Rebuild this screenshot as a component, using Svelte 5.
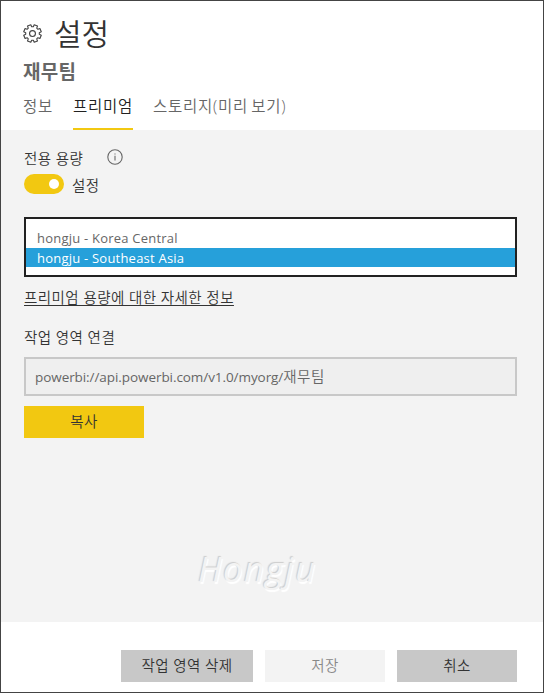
<script lang="ts">
	interface Tab {
		id: string;
		label: string;
	}

	const tabs: Tab[] = [
		{ id: 'about', label: '정보' },
		{ id: 'premium', label: '프리미엄' },
		{ id: 'storage', label: '스토리지(미리 보기)' }
	];

	const capacities = ['hongju - Korea Central', 'hongju - Southeast Asia'];
	const endpoint = 'powerbi://api.powerbi.com/v1.0/myorg/';
	const workspace = '재무팀';

	let activeTab = $state('premium');
	let dedicated = $state(true);
	let selected = $state(capacities[1]);

	// Outline of the eight-toothed gear in a 20x20 box, notches on the axes
	function gearPath(): string {
		const points: string[] = [];
		for (let i = 0; i < 8; i++) {
			const mid = ((i + 0.5) * Math.PI) / 4;
			for (const [offset, r] of [[-0.27, 7.2], [-0.2, 9.4], [0.2, 9.4], [0.27, 7.2]]) {
				const a = mid + offset;
				points.push(`${(10 + r * Math.cos(a)).toFixed(2)} ${(10 + r * Math.sin(a)).toFixed(2)}`);
			}
		}
		return `M${points.join('L')}Z`;
	}

	function copyConnection() {
		navigator.clipboard?.writeText(endpoint + workspace);
	}
</script>

<div class="panel">
	<header>
		<div class="title-row">
			<svg class="gear" viewBox="0 0 20 20" aria-hidden="true">
				<path d={gearPath()} />
				<circle cx="10" cy="10" r="3.1" />
			</svg>
			<h1>설정</h1>
		</div>
		<h2>{workspace}</h2>
		<nav role="tablist">
			{#each tabs as tab (tab.id)}
				<button
					class="tab"
					class:active={activeTab === tab.id}
					role="tab"
					type="button"
					aria-selected={activeTab === tab.id}
					onclick={() => (activeTab = tab.id)}
				>
					{tab.label}
				</button>
			{/each}
		</nav>
	</header>

	<main>
		<div class="label-row">
			<span class="label">전용 용량</span>
			<svg class="info" viewBox="0 0 16 16" aria-hidden="true">
				<circle cx="8" cy="8" r="7.2" />
				<path d="M8 6.7V11.6M8 4.4V5.6" />
			</svg>
		</div>
		<div class="toggle-row">
			<button
				class="toggle"
				class:on={dedicated}
				type="button"
				role="switch"
				aria-checked={dedicated}
				aria-label="전용 용량"
				onclick={() => (dedicated = !dedicated)}
			></button>
			<span>설정</span>
		</div>

		<div class="capacity-list" role="listbox">
			{#each capacities as capacity (capacity)}
				<button
					class="option"
					class:selected={selected === capacity}
					type="button"
					role="option"
					aria-selected={selected === capacity}
					onclick={() => (selected = capacity)}
				>
					{capacity}
				</button>
			{/each}
		</div>

		<a class="more" href="#premium">프리미엄 용량에 대한 자세한 정보</a>

		<span class="label connection-label">작업 영역 연결</span>
		<div class="connection">{endpoint}<span class="workspace">{workspace}</span></div>
		<button class="btn copy" type="button" onclick={copyConnection}>복사</button>

		<div class="watermark">Hongju</div>
	</main>

	<footer>
		<button class="btn delete" type="button">작업 영역 삭제</button>
		<button class="btn save" type="button" disabled>저장</button>
		<button class="btn cancel" type="button">취소</button>
	</footer>
</div>

<style>
	.panel {
		box-sizing: border-box;
		display: flex;
		flex-direction: column;
		width: 544px;
		height: 693px;
		border: 1px solid #444444;
		background: #ffffff;
		color: #333333;
		font-family: 'Open Sans', 'Noto Sans CJK KR', sans-serif;
		font-size: 14.5px;
		font-weight: 350;
		letter-spacing: 0.45px;
	}

	button {
		margin: 0;
		padding: 0;
		border: 0;
		background: none;
		color: inherit;
		font: inherit;
		letter-spacing: inherit;
		white-space: nowrap;
		cursor: pointer;
	}

	header {
		height: 129px;
		flex: none;
	}

	.title-row {
		display: flex;
		align-items: center;
		height: 38px;
		padding: 13px 0 0 22px;
	}

	.gear {
		width: 19px;
		height: 19px;
		fill: none;
		stroke: #444444;
		stroke-linejoin: round;
		stroke-width: 1.2;
	}

	h1 {
		margin: 1px 0 0 12px;
		font-size: 30px;
		font-weight: 350;
		letter-spacing: 0;
		line-height: 38px;
	}

	h2 {
		margin: 6px 0 0 22px;
		color: #666666;
		font-size: 19px;
		font-weight: 700;
		letter-spacing: 0.3px;
		line-height: 28px;
		height: 26px;
	}

	nav {
		display: flex;
		gap: 20px;
		height: 46px;
		padding-left: 22px;
	}

	.tab {
		box-sizing: border-box;
		height: 46px;
		border-bottom: 2px solid transparent;
		color: #666666;
		font-size: 15.5px;
		letter-spacing: 0.74px;
		line-height: 44px;
		word-spacing: -1.5px;
	}

	.tab.active {
		border-bottom-color: #f2c811;
		color: #212121;
	}

	main {
		display: flex;
		flex-direction: column;
		align-items: flex-start;
		height: 492px;
		flex: none;
		padding: 0 26px 0 23px;
		box-sizing: border-box;
		background: #f3f3f3;
	}

	.label-row {
		display: flex;
		align-items: center;
		height: 20px;
		margin-top: 17px;
	}

	.info {
		width: 16px;
		height: 16px;
		margin-left: 24px;
		fill: none;
		stroke: #666666;
		stroke-width: 1.1;
	}

	.toggle-row {
		display: flex;
		align-items: center;
		gap: 8px;
		height: 20px;
		margin-top: 7px;
	}

	.toggle {
		display: flex;
		align-items: center;
		width: 40px;
		height: 20px;
		padding: 0 5px;
		border-radius: 10px;
		background: #a6a6a6;
	}

	.toggle::after {
		content: '';
		width: 10px;
		height: 10px;
		border-radius: 50%;
		background: #ffffff;
	}

	.toggle.on {
		justify-content: flex-end;
		background: #f2c811;
	}

	.capacity-list {
		display: flex;
		flex-direction: column;
		box-sizing: border-box;
		align-self: stretch;
		height: 60px;
		margin-top: 23px;
		padding-top: 9px;
		border: 2px solid #212121;
		background: #ffffff;
	}

	.option {
		height: 20px;
		padding-left: 11px;
		color: #666666;
		font-size: 13px;
		font-weight: 400;
		letter-spacing: 0.22px;
		line-height: 20px;
		text-align: left;
	}

	.option.selected {
		height: 19px;
		background: #26a0da;
		color: #ffffff;
	}

	.more {
		margin-top: 11px;
		color: #333333;
		line-height: 20px;
		text-underline-offset: 2px;
	}

	.connection-label {
		margin-top: 20px;
		line-height: 20px;
	}

	.connection {
		box-sizing: border-box;
		align-self: stretch;
		height: 39px;
		margin-top: 9px;
		padding-left: 9px;
		border: 2px solid #c8c8c8;
		background: #efefef;
		color: #666666;
		font-size: 13.5px;
		font-weight: 400;
		letter-spacing: -0.07px;
		line-height: 35px;
	}

	.workspace {
		font-size: 14.5px;
		font-weight: 350;
		letter-spacing: 0.5px;
	}

	.btn {
		width: 120px;
		height: 32px;
		background: #c8c8c8;
		line-height: 32px;
	}

	.copy {
		margin-top: 10px;
		background: #f2c811;
	}

	.watermark {
		margin: 106px 0 0 174px;
		color: #f3f3f3;
		font-size: 35px;
		font-style: italic;
		font-weight: 400;
		letter-spacing: 1.3px;
		line-height: 50px;
		text-shadow: -1px -1px 1px #cccccc, 1px 2px 1px #ffffff;
	}

	footer {
		display: flex;
		justify-content: flex-end;
		gap: 12px;
		padding: 28px 26px 0 0;
	}

	.delete {
		width: 132px;
	}

	.save {
		background: #f3f3f3;
		color: #888888;
		cursor: default;
	}
</style>
